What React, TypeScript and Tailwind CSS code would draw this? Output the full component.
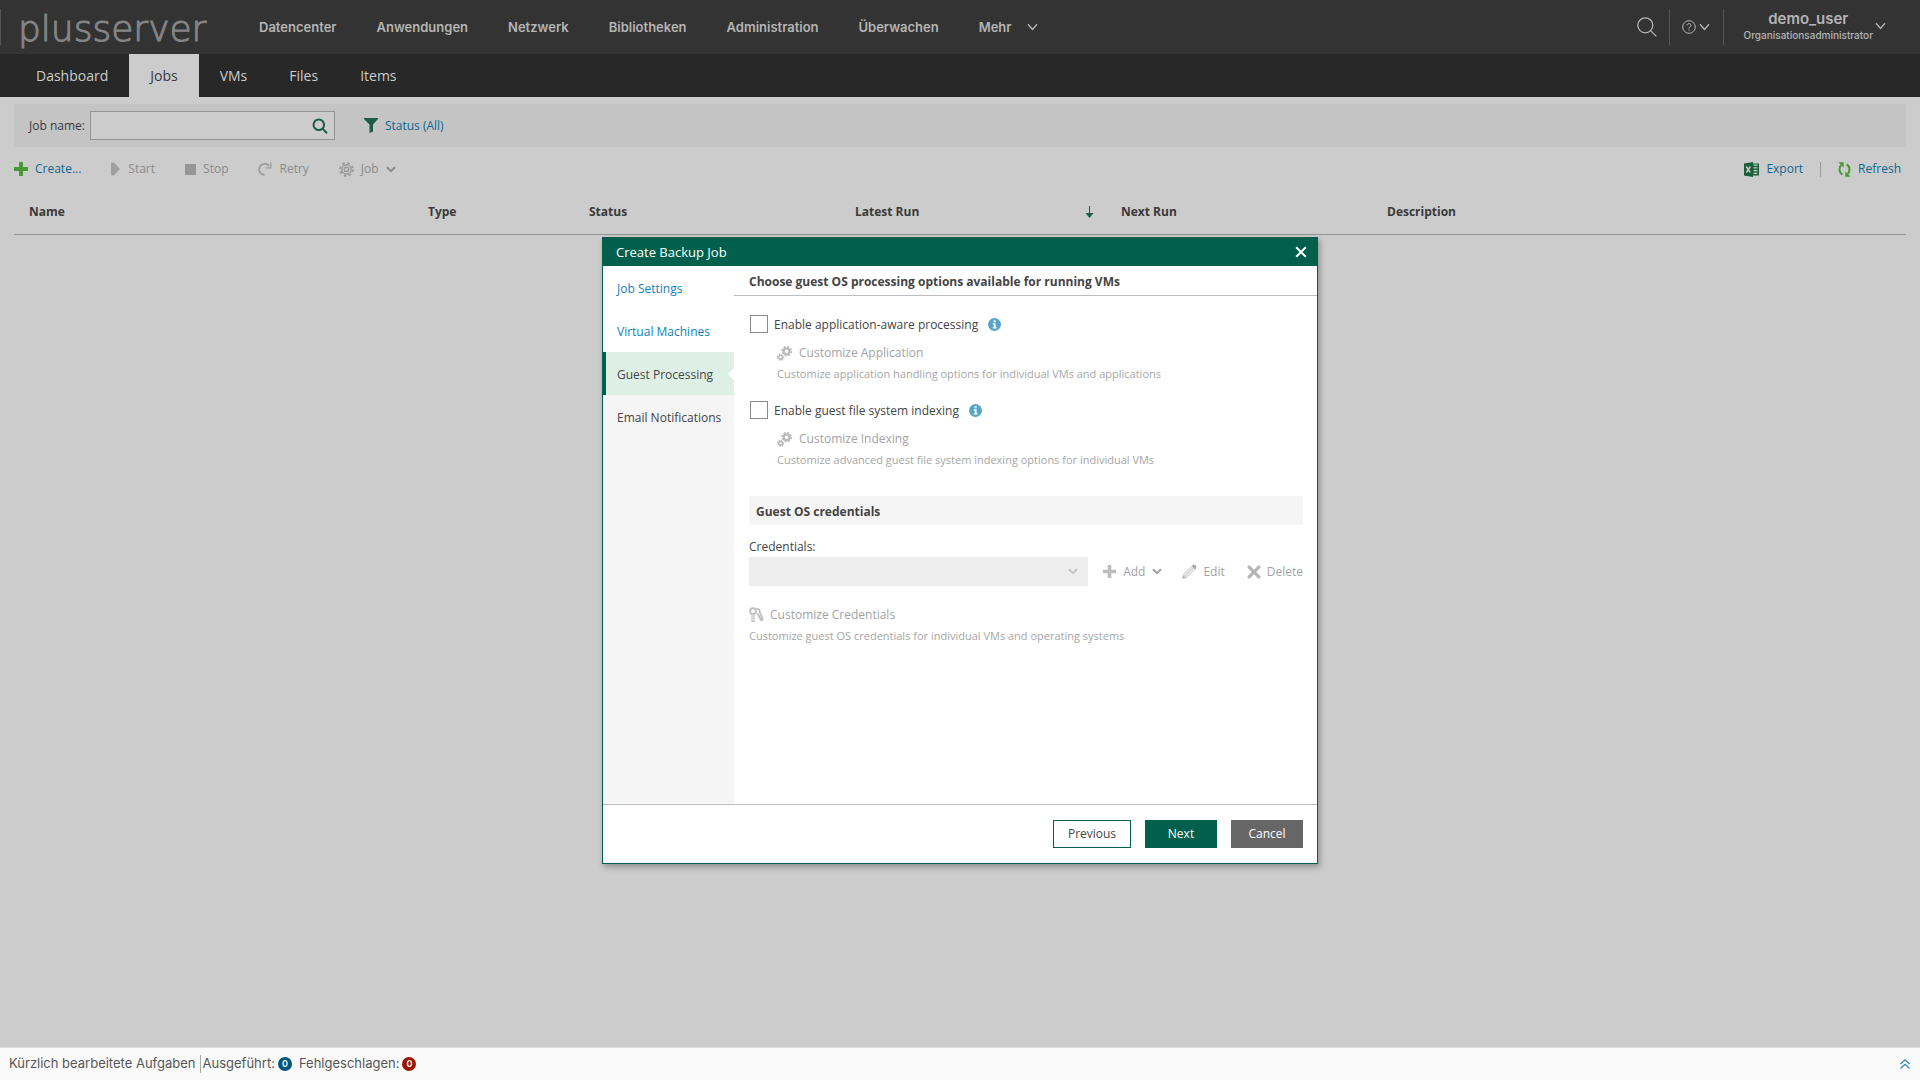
import type { ReactNode } from 'react'

const mainNav = ['Datencenter', 'Anwendungen', 'Netzwerk', 'Bibliotheken', 'Administration', 'Überwachen']

const tabs = ['Dashboard', 'Jobs', 'VMs', 'Files', 'Items']

const columns = [
  { label: 'Name', width: 'w-[399px]' },
  { label: 'Type', width: 'w-[161px]' },
  { label: 'Status', width: 'w-[266px]' },
  { label: 'Latest Run', width: 'w-[266px]', sorted: true },
  { label: 'Next Run', width: 'w-[266px]' },
  { label: 'Description', width: '' },
]

const steps = [
  { label: 'Job Settings', state: 'done' },
  { label: 'Virtual Machines', state: 'done' },
  { label: 'Guest Processing', state: 'current' },
  { label: 'Email Notifications', state: 'next' },
]

const options = [
  {
    id: 'app-aware',
    label: 'Enable application-aware processing',
    action: 'Customize Application',
    hint: 'Customize application handling options for individual VMs and applications',
  },
  {
    id: 'fs-indexing',
    label: 'Enable guest file system indexing',
    action: 'Customize Indexing',
    hint: 'Customize advanced guest file system indexing options for individual VMs',
  },
]

function ThinChevron() {
  return (
    <svg width="11" height="8" viewBox="0 0 11 8" fill="none" stroke="currentColor" strokeWidth="1.4">
      <path d="M1 1.2 5.5 6.4 10 1.2" />
    </svg>
  )
}

function BoldChevron() {
  return (
    <svg width="10" height="7" viewBox="0 0 10 7" fill="none" stroke="currentColor" strokeWidth="2">
      <path d="M1 1.2 5 5.2 9 1.2" />
    </svg>
  )
}

function PlusIcon({ size }: { size: number }) {
  return (
    <svg width={size} height={size} viewBox="0 0 13 13" fill="currentColor">
      <path d="M4.7 0h3.6v4.7H13v3.6H8.3V13H4.7V8.3H0V4.7h4.7z" />
    </svg>
  )
}

function GearIcon() {
  return (
    <svg width="15" height="15" viewBox="0 0 15 15" fill="none" stroke="#9a9a9a">
      <circle cx="7.5" cy="7.5" r="6.4" strokeWidth="2" strokeDasharray="2.5 2.53" />
      <circle cx="7.5" cy="7.5" r="4.7" strokeWidth="1.4" />
      <circle cx="7.5" cy="7.5" r="2.2" strokeWidth="1.6" />
    </svg>
  )
}

function GearsIcon() {
  return (
    <svg width="15" height="15" viewBox="0 0 15 15" fill="none" stroke="#bababa">
      <circle cx="9.6" cy="5.2" r="2.9" strokeWidth="2.2" />
      <circle cx="9.6" cy="5.2" r="4.5" strokeWidth="1.8" strokeDasharray="1.9 1.63" />
      <circle cx="3.7" cy="11.200" r="1.9" strokeWidth="1.6" />
      <circle cx="3.7" cy="11.200" r="3.1" strokeWidth="1.2" strokeDasharray="1.3 1.13" />
      <path d="M2.500 6.200C4.500 7 6.800 8.800 7.800 11.500" stroke="#fff" strokeWidth="0.9" />
    </svg>
  )
}

function InfoIcon() {
  return (
    <svg width="13" height="13" viewBox="0 0 13 13">
      <circle cx="6.5" cy="6.5" r="6.5" fill="#56a5cb" />
      <path d="M5.6 2.3h2v1.9h-2zM4.8 5.2h2.8v4h.9v1.2H4.8V9.2h.9V6.4h-.9z" fill="#fff" />
    </svg>
  )
}

function KeysIcon() {
  return (
    <svg width="15" height="16" viewBox="0 0 15 16" fill="none" stroke="#c0c0c0">
      <path d="M7.5 2.2c2-.8 3.4.6 3.1 2.4L13.4 11.4V13H12L8.600 6.5" strokeWidth="1.8" />
      <circle cx="4" cy="4.2" r="2.9" strokeWidth="2" />
      <path d="M4 7v8" strokeWidth="3.2" />
      <path d="M4 7.5V14" stroke="#eee" strokeWidth="1" />
    </svg>
  )
}

function PencilIcon() {
  return (
    <svg width="15" height="15" viewBox="0 0 15 15">
      <path d="M1.2 10.5 9.6 2.1l3.3 3.3-8.4 8.4z" fill="#e9e9e9" stroke="#cbcbcb" strokeWidth="0.8" />
      <path d="M3 12 11.2 3.8" stroke="#cfcfcf" />
      <path d="m9.800 1.900 1.600-1.600 1 .9L13 .7 14.500 2l-.7.9.9.9-1.600 1.600z" fill="#aaa" />
      <path d="M.2 14.8 1 10.9l3.200 3.200z" fill="#b3b3b3" />
    </svg>
  )
}

function ExcelIcon() {
  return (
    <svg width="15" height="15" viewBox="0 0 15 15">
      <path d="M8 1.5h7v12H8z" fill="#1a5f38" />
      <path d="M9.5 3.2h4M9.5 5.9h4M9.5 8.6h4M9.5 11.3h4" stroke="#ccc" strokeWidth="1.3" />
      <path d="M0 1.5 9 0v15L0 13.5z" fill="#1a5f38" />
      <path d="m2.300 4.500 4 6M6.400 4.500l-4.100 6" stroke="#ccc" strokeWidth="1.4" />
    </svg>
  )
}

function RefreshIcon() {
  return (
    <svg width="13" height="15" viewBox="0 0 13 15" fill="none" stroke="#469a35" strokeWidth="2">
      <path d="M4.3 12.6C1.2 10.6.4 6.3 3.2 2.8" />
      <path d="M8.7 2.4c3.1 2 3.9 6.300 1.100 9.800" />
      <path d="M.4.3h5.300v5.200zM12.600 14.700H7.300V9.500z" fill="#469a35" stroke="none" />
    </svg>
  )
}

function ToolButton({ icon, children, disabled }: { icon: ReactNode; children: ReactNode; disabled?: boolean }) {
  return (
    <button
      type="button"
      disabled={disabled}
      className={`flex items-center gap-[7px] ${disabled ? 'text-[#8b8b8b]' : 'text-[#0b6794]'}`}
    >
      {icon}
      {children}
    </button>
  )
}

function TopBar() {
  return (
    <header className="flex h-[54px] shrink-0 items-center bg-[#333] font-[Inter,sans-serif] text-[#b5b5b5]">
      <div className="h-9 w-px bg-[#555]" />
      <a
        href="#"
        className="ml-[17px] w-[238px] pt-1 font-['DejaVu_Sans',sans-serif] text-[36px] leading-9 font-extralight text-[#858585] [-webkit-text-stroke:1px_#858585]"
      >
        plusserver
      </a>
      <nav className="flex items-center gap-10 pl-[3px] text-[13px] leading-5 font-semibold">
        {mainNav.map((item) => (
          <a key={item} href="#" className="whitespace-nowrap">
            {item}
          </a>
        ))}
        <button type="button" className="flex items-center gap-4">
          Mehr
          <ThinChevron />
        </button>
      </nav>
      <div className="ml-auto flex items-center">
        <button type="button" aria-label="Suche" className="mr-3">
          <svg width="20" height="20" viewBox="0 0 20 20" fill="none" stroke="currentColor" strokeWidth="1.3">
            <circle cx="8.3" cy="8.3" r="7.5" />
            <path d="m13.600 13.600 5.800 5.800" />
          </svg>
        </button>
        <div className="h-9 w-px bg-[#555]" />
        <button type="button" aria-label="Hilfe" className="mx-3 flex w-[29px] items-center gap-[3px]">
          <svg width="14" height="14" viewBox="0 0 14 14" fill="none" stroke="currentColor">
            <circle cx="7" cy="7" r="6.3" />
            <path d="M5.1 5.5c0-2.6 3.9-2.4 3.9-.2C9 6.8 7 6.7 7 8.5M7 9.5v1.2" />
          </svg>
          <ThinChevron />
        </button>
        <div className="h-9 w-px bg-[#555]" />
        <button type="button" className="mr-[34px] ml-5 flex items-center gap-[2px] pb-[2px]">
          <span className="flex flex-col items-center">
            <span className="text-[15px] leading-[18px] font-semibold">demo_user</span>
            <span className="text-[10px] leading-[14px] font-medium">Organisationsadministrator</span>
          </span>
          <ThinChevron />
        </button>
      </div>
    </header>
  )
}

function TabBar() {
  return (
    <nav className="flex h-[43px] shrink-0 bg-[#282828] pl-[15px] text-sm text-[#ccc]">
      {tabs.map((tab) => (
        <a
          key={tab}
          href="#"
          className={`flex items-center px-[21px] ${tab === 'Jobs' ? 'bg-[#ccc] text-[#3a3a3a]' : ''}`}
        >
          {tab}
        </a>
      ))}
    </nav>
  )
}

function JobsPage() {
  return (
    <section className="px-[14px] pt-[7px] text-xs">
      <div className="flex h-[43px] items-center bg-[#c4c4c4] pl-[15px]">
        <label htmlFor="job-name" className="text-[#3a3a3a]">
          Job name:
        </label>
        <div className="ml-[5px] flex h-[29px] w-[245px] items-center border border-[#939393] bg-[#ccc] pr-[6px]">
          <input id="job-name" className="h-full min-w-0 flex-1 px-2 outline-none" />
          <button type="button" aria-label="Search">
            <svg width="16" height="16" viewBox="0 0 16 16" fill="none" stroke="#1d5c45" strokeWidth="2">
              <circle cx="6.8" cy="6.8" r="5.3" />
              <path d="m10.600 10.600 4.400 4.600" />
            </svg>
          </button>
        </div>
        <button type="button" className="ml-[29px] flex items-center gap-[7px] text-[#0b6794]">
          <svg width="14" height="15" viewBox="0 0 14 15" fill="#1d5c45">
            <path d="M0 0h14v1L9 6.5v7L5.5 15V6.5L0 1z" />
          </svg>
          Status (All)
        </button>
      </div>

      <div className="flex h-[44px] items-center justify-between">
        <div className="flex items-center gap-[30px]">
          <ToolButton
            icon={
              <span className="text-[#469a35]">
                <PlusIcon size={14} />
              </span>
            }
          >
            Create...
          </ToolButton>
          <ToolButton
            disabled
            icon={
              <svg width="10" height="14" viewBox="0 0 10 14" fill="#a0a0a0">
                <path d="M0 .5h3L9 7l-6 6.500H0z" />
              </svg>
            }
          >
            Start
          </ToolButton>
          <ToolButton disabled icon={<span className="size-[11px] bg-[#969696]" />}>
            Stop
          </ToolButton>
          <ToolButton
            disabled
            icon={
              <svg width="14" height="14" viewBox="0 0 14 14" fill="none" stroke="#a0a0a0" strokeWidth="2">
                <path d="M6.5 13C2.5 12.4.7 9.5 1.2 6.5 2 2 7.5.2 11.2 3.8" />
                <path d="M12.8.5v5.4H7.5" strokeWidth="1.4" />
              </svg>
            }
          >
            Retry
          </ToolButton>
          <ToolButton disabled icon={<GearIcon />}>
            Job
            <BoldChevron />
          </ToolButton>
        </div>
        <div className="flex items-center pr-[5px]">
          <ToolButton icon={<ExcelIcon />}>Export</ToolButton>
          <div className="mx-[17px] h-[15px] w-px bg-[#999]" />
          <ToolButton icon={<RefreshIcon />}>Refresh</ToolButton>
        </div>
      </div>

      <table className="w-full table-fixed border-collapse text-left">
        <thead>
          <tr className="h-[43px] border-b border-[#939393] text-[#3a3a3a]">
            {columns.map((col) => (
              <th key={col.label} className={`pr-3 pl-[15px] font-bold ${col.width}`}>
                <span className="flex items-center justify-between">
                  {col.label}
                  {col.sorted && (
                    <svg width="9" height="12" viewBox="0 0 9 12" fill="#1d5c45">
                      <path d="M4 0h1v7h3.500L4.500 12 .5 7H4z" />
                    </svg>
                  )}
                </span>
              </th>
            ))}
          </tr>
        </thead>
      </table>
    </section>
  )
}

function StepList() {
  return (
    <nav className="w-[131px] shrink-0 bg-[#f5f5f5]">
      {steps.map((step) => {
        if (step.state === 'current') {
          return (
            <a
              key={step.label}
              href="#"
              aria-current="step"
              className="relative flex h-[43px] items-center border-l-3 border-[#00604b] bg-[#def0e6] pt-[2px] pl-[11px] text-[#444]"
            >
              {step.label}
              <svg className="absolute top-4 right-0" width="6" height="12" viewBox="0 0 6 12" fill="#fff">
                <path d="M6 0v12L0 6z" />
              </svg>
            </a>
          )
        }
        return (
          <a
            key={step.label}
            href="#"
            className={`flex h-[43px] items-center pt-[2px] pl-[14px] ${
              step.state === 'done' ? 'bg-white text-[#0d83bd]' : 'text-[#444]'
            }`}
          >
            {step.label}
          </a>
        )
      })}
    </nav>
  )
}

function GuestProcessing() {
  return (
    <div className="min-w-0 flex-1">
      <h3 className="flex h-[30px] items-center border-b border-[#bdbdbd] px-[15px] pt-[2px] font-bold text-[#444]">
        Choose guest OS processing options available for running VMs
      </h3>
      <div className="pt-[19px] pr-[14px] pl-[15px]">
        {options.map((opt) => (
          <div key={opt.id} className="mb-[19px]">
            <div className="flex h-[18px] items-center text-[#444]">
              <input
                id={opt.id}
                type="checkbox"
                className="ml-px size-[18px] appearance-none border border-[#8a8a8a] bg-white"
              />
              <label htmlFor={opt.id} className="mr-[10px] ml-[6px] pt-[2px]">
                {opt.label}
              </label>
              <InfoIcon />
            </div>
            <button type="button" disabled className="mt-3 ml-7 flex h-4 items-center gap-[7px] text-[#a3a3a3]">
              <GearsIcon />
              {opt.action}
            </button>
            <p className="mt-[5px] ml-7 text-[11px] leading-4 text-[#a6a6a6]">{opt.hint}</p>
          </div>
        ))}

        <h4 className="mt-7 flex h-[29px] items-center bg-[#f5f5f5] px-[7px] pt-[2px] font-bold text-[#444]">
          Guest OS credentials
        </h4>
        <label htmlFor="credentials" className="mt-[14px] block text-[#444]">
          Credentials:
        </label>
        <div className="mt-[2px] flex items-center text-[#a3a3a3]">
          <div className="relative min-w-0 flex-1">
            <select id="credentials" disabled className="block h-[29px] w-full appearance-none bg-[#ededed] px-2">
              <option></option>
            </select>
            <span className="absolute top-[11px] right-[10px] text-[#c4c4c4]">
              <BoldChevron />
            </span>
          </div>
          <button type="button" disabled className="ml-[15px] flex items-center gap-[7px]">
            <span className="text-[#bdbdbd]">
              <PlusIcon size={13} />
            </span>
            Add
            <BoldChevron />
          </button>
          <button type="button" disabled className="ml-5 flex items-center gap-[6px]">
            <PencilIcon />
            Edit
          </button>
          <button type="button" disabled className="ml-[22px] flex items-center gap-[6px]">
            <svg width="14" height="14" viewBox="0 0 14 14" stroke="#b5b5b5" strokeWidth="3.2">
              <path d="m1.200 1.200 11.600 11.600M12.800 1.200 1.200 12.800" />
            </svg>
            Delete
          </button>
        </div>
        <button type="button" disabled className="mt-[21px] flex h-4 items-center gap-[6px] text-[#a3a3a3]">
          <KeysIcon />
          Customize Credentials
        </button>
        <p className="mt-[5px] text-[11px] leading-4 text-[#a6a6a6]">
          Customize guest OS credentials for individual VMs and operating systems
        </p>
      </div>
    </div>
  )
}

function CreateJobDialog() {
  return (
    <div
      role="dialog"
      aria-labelledby="dialog-title"
      className="flex w-[716px] flex-col border border-[#00604b] bg-white text-xs shadow-[2px_3px_6px_rgba(0,0,0,0.3)]"
    >
      <div className="flex h-7 items-center justify-between bg-[#00604b] pr-[10px] pl-[13px] text-white">
        <h2 id="dialog-title" className="text-[13px] leading-5">
          Create Backup Job
        </h2>
        <button type="button" aria-label="Close">
          <svg width="12" height="12" viewBox="0 0 12 12" stroke="#fff" strokeWidth="2">
            <path d="m1.200 1.200 9.600 9.600M10.800 1.200 1.200 10.800" />
          </svg>
        </button>
      </div>
      <div className="flex min-h-[538px]">
        <StepList />
        <GuestProcessing />
      </div>
      <div className="flex justify-end gap-[14px] border-t border-[#bdbdbd] px-[14px] py-[15px]">
        <button type="button" className="h-7 w-[78px] border border-[#00604b] text-[#444]">
          Previous
        </button>
        <button type="button" className="h-7 w-[72px] bg-[#00604b] text-white">
          Next
        </button>
        <button type="button" className="h-7 w-[72px] bg-[#666] text-white">
          Cancel
        </button>
      </div>
    </div>
  )
}

function TaskBar() {
  return (
    <footer className="flex h-[33px] shrink-0 items-center border-t border-[#ddd] bg-[#fafafa] px-[9px] font-[Inter,sans-serif] text-[13px] text-[#565656]">
      <span>Kürzlich bearbeitete Aufgaben</span>
      <span className="mr-[2px] ml-1 h-[18px] w-px bg-[#aaa]" />
      <span>Ausgeführt:</span>
      <span className="ml-[3px] flex size-[14px] items-center justify-center rounded-full bg-[#00567a] text-[9px] font-semibold text-white">
        0
      </span>
      <span className="ml-[7px]">Fehlgeschlagen:</span>
      <span className="ml-[3px] flex size-[14px] items-center justify-center rounded-full bg-[#991700] text-[9px] font-semibold text-white">
        0
      </span>
      <button type="button" aria-label="Aufgaben einblenden" className="ml-auto">
        <svg width="12" height="12" viewBox="0 0 12 12" fill="none" stroke="#2b86b5" strokeWidth="1.2">
          <path d="M1.5 6 6 1.8 10.5 6M1.5 10.5 6 6.3l4.500 4.200" />
        </svg>
      </button>
    </footer>
  )
}

export default function App() {
  return (
    <div className="flex h-screen flex-col bg-[#ccc] font-['Open_Sans',sans-serif]">
      <TopBar />
      <main className="relative flex flex-1 flex-col">
        <TabBar />
        <JobsPage />
        <div className="absolute inset-0 flex items-center justify-center">
          <CreateJobDialog />
        </div>
      </main>
      <TaskBar />
    </div>
  )
}
